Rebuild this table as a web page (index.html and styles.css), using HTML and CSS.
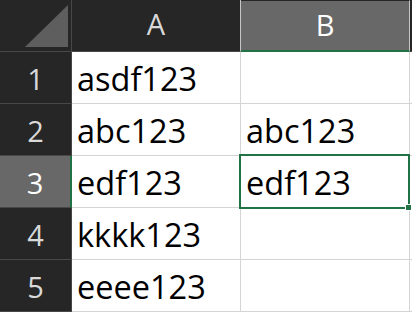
FILE: index.html
```html
<!DOCTYPE html>
<html>
<head>
<meta charset="utf-8">
<link rel="stylesheet" href="styles.css">
</head>
<body>
<div class="sheet">
  <div class="grid">
    <div class="hd corner">
      <svg class="tri" width="72" height="52" viewBox="0 0 72 52"><polygon points="25,47 68,5 68,47" fill="#5e5e5e"/></svg>
    </div>
    <div class="hd col">A</div>
    <div class="hd col sel-col">B</div>
    <div class="hd fill"></div>

    <div class="hd row">1</div>
    <div class="cell">asdf123</div>
    <div class="cell"></div>
    <div class="cell blank"></div>

    <div class="hd row">2</div>
    <div class="cell">abc123</div>
    <div class="cell">abc123</div>
    <div class="cell blank"></div>

    <div class="hd row sel-row">3</div>
    <div class="cell">edf123</div>
    <div class="cell">edf123</div>
    <div class="cell blank"></div>

    <div class="hd row">4</div>
    <div class="cell">kkkk123</div>
    <div class="cell"></div>
    <div class="cell blank"></div>

    <div class="hd row">5</div>
    <div class="cell">eeee123</div>
    <div class="cell"></div>
    <div class="cell blank"></div>
  </div>
  <div class="selection"><span class="handle"></span></div>
</div>
</body>
</html>
```
FILE: styles.css
```css
html, body {
  margin: 0;
  padding: 0;
  background: #ffffff;
}
.sheet {
  position: relative;
  width: 412px;
  height: 313px;
  overflow: hidden;
}
.grid {
  display: grid;
  grid-template-columns: 72px 169px 169px 1fr;
  grid-auto-rows: 52px;
}
.hd {
  box-sizing: border-box;
  background: #262626;
  color: #d9d9d9;
  font-family: "Open Sans", sans-serif;
  font-size: 29px;
  display: flex;
  align-items: center;
  justify-content: center;
  border-right: 1px solid #474747;
  border-bottom: 1px solid #474747;
}
.corner {
  position: relative;
  padding: 0;
}
.tri {
  display: block;
  position: absolute;
  left: 0;
  top: 0;
}
.hd.col {
  padding-bottom: 4px;
  border-right-color: #c6c6c6;
}
.hd.sel-col {
  background: #686868;
  color: #ffffff;
  border-top: 1px solid #262626;
  border-bottom: 2px solid #217346;
  border-right: 1px solid #c6c6c6;
  padding-bottom: 2px;
}
.fill {
  border-right: none;
}
.row {
  align-items: flex-end;
  padding-bottom: 5px;
}
.sel-row {
  background: #686868;
  color: #ffffff;
  border-right: 2px solid #217346;
}
.cell {
  box-sizing: border-box;
  border-right: 1px solid #d4d4d4;
  border-bottom: 1px solid #d4d4d4;
  font-family: "Open Sans", sans-serif;
  font-size: 32.5px;
  line-height: 32px;
  color: #000000;
  display: flex;
  align-items: flex-end;
  padding: 0 0 8px 5px;
  white-space: nowrap;
}
.cell.blank {
  border-right: none;
}
.selection {
  position: absolute;
  left: 239px;
  top: 154px;
  width: 171px;
  height: 55px;
  box-sizing: border-box;
  border: 2px solid #217346;
}
.handle {
  position: absolute;
  right: -4px;
  bottom: -4px;
  width: 5px;
  height: 5px;
  background: #217346;
  border: 1px solid #ffffff;
}
```
